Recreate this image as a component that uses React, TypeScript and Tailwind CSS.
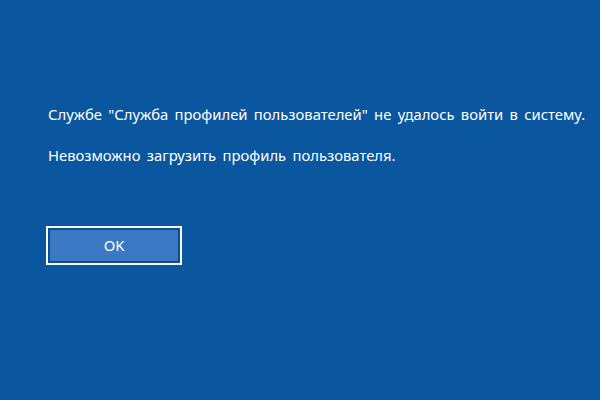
import React from "react";

const App: React.FC = () => {
  return (
    <div
      className="w-[600px] h-[400px] bg-[#0a569f] text-white overflow-hidden"
      style={{ fontFamily: '"Noto Sans", "Open Sans", sans-serif' }}
    >
      <div className="pt-[105px] pl-[48px] flex flex-col">
        <p className="text-[14.8px] leading-[18px] whitespace-nowrap [word-spacing:2.5px]">
          Службе "Служба профилей пользователей" не удалось войти в систему.
        </p>
        <p className="mt-[23px] text-[14.8px] leading-[18px] whitespace-nowrap [word-spacing:2.5px]">
          Невозможно загрузить профиль пользователя.
        </p>

        <button className="mt-[62px] -ml-[2px] w-[136px] h-[39px] border-2 border-white p-[2px] bg-[#0a4f92]">
          <span className="w-full h-full flex items-center justify-center bg-[#3a78c4] text-[14.8px] text-white">
            OK
          </span>
        </button>
      </div>
    </div>
  );
};

export default App;
